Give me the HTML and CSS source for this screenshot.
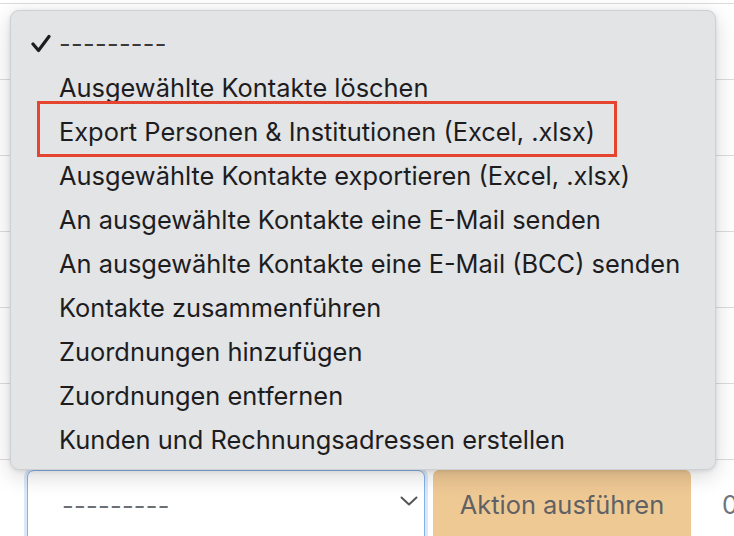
FILE: index.html
```html
<!DOCTYPE html>
<html lang="de">
<head>
<meta charset="utf-8">
<title>Aktionen</title>
<link rel="stylesheet" href="styles.css">
</head>
<body>
<div class="page">
  <div class="table">
    <div class="row"></div>
    <div class="row"></div>
    <div class="row"></div>
    <div class="row"></div>
    <div class="row"></div>
    <div class="row"></div>
  </div>
  <div class="actions">
    <div class="select">
      <span class="select-value">---------</span>
      <svg class="chevron" width="18" height="10" viewBox="0 0 18 10"><path d="M1.5 1.5 L9 8.5 L16.5 1.5" fill="none" stroke="#555" stroke-width="2" stroke-linecap="round" stroke-linejoin="round"/></svg>
    </div>
    <div class="btn">Aktion ausführen</div>
    <div class="counter">0</div>
  </div>
</div>

<div class="menu">
  <div class="item checked">
    <svg class="check" width="20" height="19" viewBox="0 0 20 19"><path d="M2 10 L7.5 16.5 L18 2.5" fill="none" stroke="#1d1d1f" stroke-width="3.2" stroke-linecap="round" stroke-linejoin="round"/></svg>
    ---------
  </div>
  <div class="item">Ausgewählte Kontakte löschen</div>
  <div class="item">Export Personen &amp; Institutionen (Excel, .xlsx)</div>
  <div class="item">Ausgewählte Kontakte exportieren (Excel, .xlsx)</div>
  <div class="item">An ausgewählte Kontakte eine E-Mail senden</div>
  <div class="item">An ausgewählte Kontakte eine E-Mail (BCC) senden</div>
  <div class="item">Kontakte zusammenführen</div>
  <div class="item">Zuordnungen hinzufügen</div>
  <div class="item">Zuordnungen entfernen</div>
  <div class="item">Kunden und Rechnungsadressen erstellen</div>
</div>
<div class="highlight"></div>
</body>
</html>
```
FILE: styles.css
```css
* { box-sizing: border-box; }
html, body { margin: 0; padding: 0; background: #fff; }
body {
  width: 734px;
  height: 536px;
  overflow: hidden;
  position: relative;
  font-family: Inter, "Noto Sans", "Liberation Sans", sans-serif;
}
.page { padding-top: 3px; }
.table { border-top: 1px solid #dcdcdc; }
.row {
  height: 76px;
  border-bottom: 1px solid #dcdcdc;
}
.actions {
  display: flex;
  align-items: flex-start;
  padding-left: 27px;
  margin-top: 10px;
}
.select {
  flex-shrink: 0;
  width: 398px;
  height: 76px;
  border: 1.5px solid #86b2ea;
  border-radius: 7px;
  box-shadow: 0 0 0 3px rgba(150, 190, 240, 0.35);
  background: #fff;
  display: flex;
  align-items: center;
  padding: 0 6px 6px 34px;
  justify-content: space-between;
}
.select-value {
  font-size: 25.4px;
  color: #6b6f74;
  letter-spacing: 0.3px;
}
.chevron { margin-top: -8px; }
.btn {
  flex-shrink: 0;
  margin-left: 8px;
  width: 258px;
  height: 76px;
  border-radius: 6px;
  background: #efc994;
  color: #5f6165;
  font-size: 25.4px;
  display: flex;
  justify-content: center;
  padding-top: 19px;
}
.counter {
  flex-shrink: 0;
  margin-left: 31px;
  font-size: 25.4px;
  color: #6c757d;
  padding-top: 19px;
}
.menu {
  position: absolute;
  left: 10px;
  top: 10px;
  width: 706px;
  height: 460px;
  background: #e3e4e6;
  border: 1px solid #cfd0d2;
  border-radius: 9px;
  box-shadow: 0 6px 22px rgba(0, 0, 0, 0.16), 0 1px 4px rgba(0, 0, 0, 0.10);
  padding: 11px 0 0 48px;
}
.item {
  position: relative;
  height: 44px;
  line-height: 44px;
  font-size: 25.4px;
  color: #1d1d1f;
  white-space: nowrap;
}
.item.checked { letter-spacing: 0.3px; color: #3a3a3c; }
.check {
  position: absolute;
  left: -28px;
  top: 12px;
}
.highlight {
  position: absolute;
  left: 37px;
  top: 101px;
  width: 580px;
  height: 56px;
  border: 3px solid #e5452f;
}
```
